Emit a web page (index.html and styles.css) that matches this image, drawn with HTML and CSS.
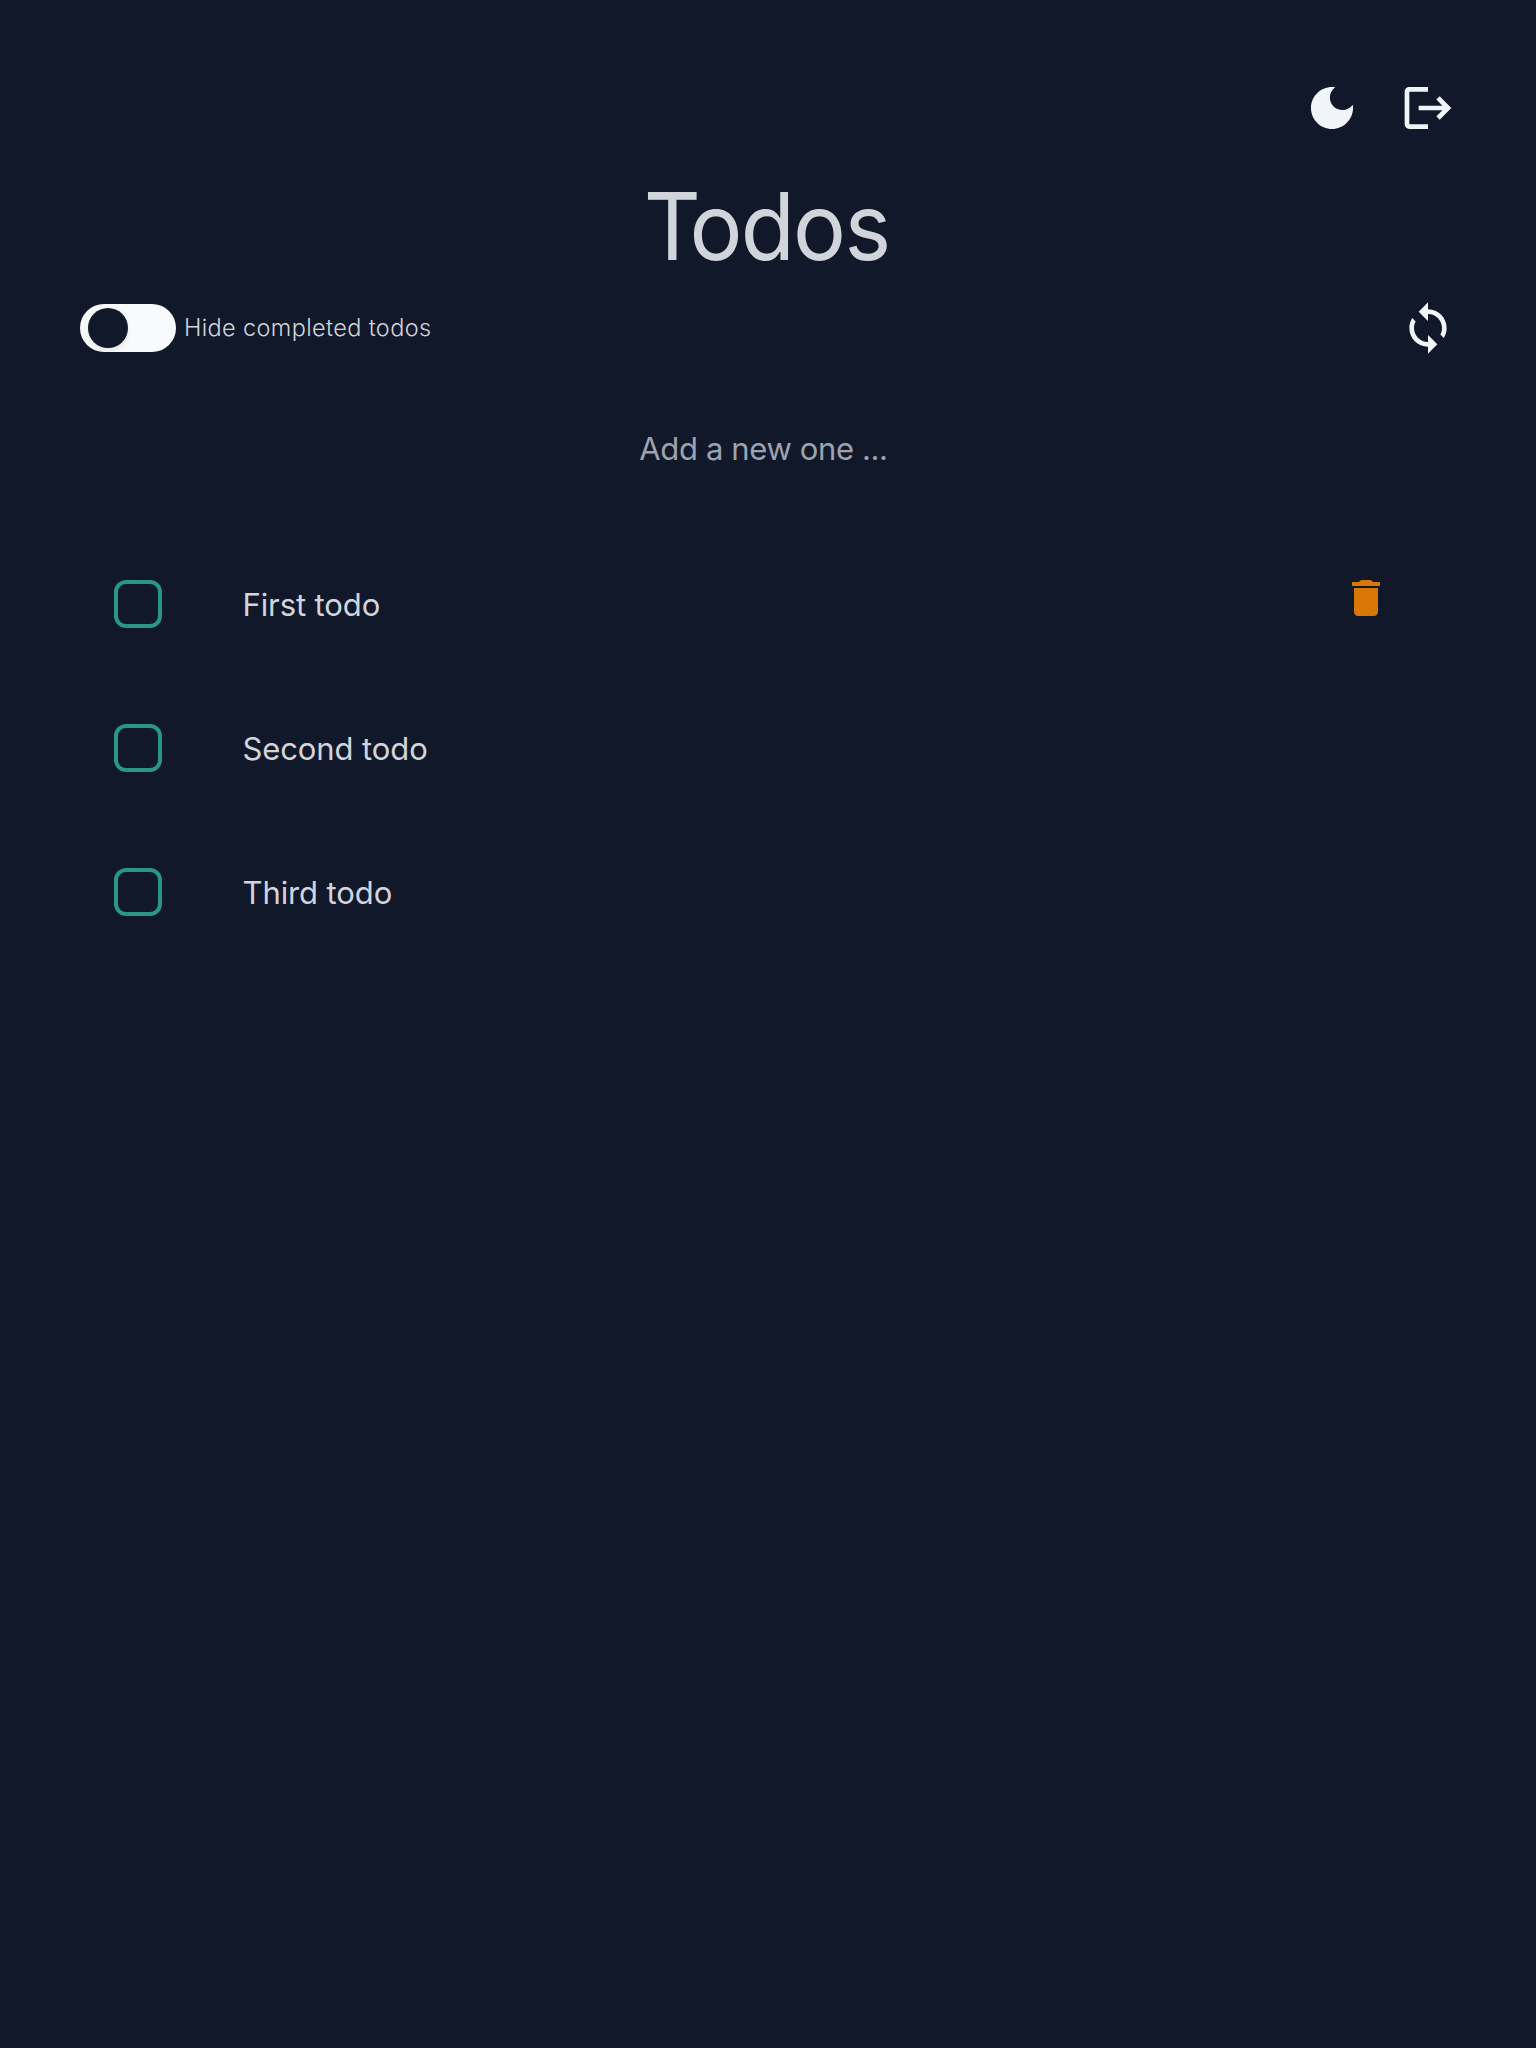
FILE: index.html
```html
<!DOCTYPE html>
<html lang="en">
<head>
<meta charset="utf-8">
<title>Todos</title>
<link rel="stylesheet" href="styles.css">
</head>
<body>
<main class="app">
  <header class="actions">
    <button class="icon-button" aria-label="Toggle theme">
      <svg viewBox="0 0 24 24"><path d="M12 3c-4.97 0-9 4.03-9 9s4.03 9 9 9 9-4.03 9-9c0-.46-.04-.92-.1-1.36-.98 1.37-2.58 2.26-4.4 2.26-2.98 0-5.4-2.42-5.4-5.4 0-1.81.89-3.42 2.26-4.4-.44-.06-.9-.1-1.36-.1z"/></svg>
    </button>
    <button class="icon-button" aria-label="Log out">
      <svg viewBox="0 0 24 24"><path d="M17 7l-1.41 1.41L18.17 11H8v2h10.17l-2.58 2.58L17 17l5-5zM4 5h8V3H4c-1.1 0-2 .9-2 2v14c0 1.1.9 2 2 2h8v-2H4V5z"/></svg>
    </button>
  </header>
  <h1 class="title">Todos</h1>
  <div class="toolbar">
    <div class="filter">
      <span class="switch" role="switch" aria-checked="false"><span class="knob"></span></span>
      <span class="filter-label">Hide completed todos</span>
    </div>
    <button class="icon-button" aria-label="Sync">
      <svg viewBox="0 0 24 24"><path d="M12 4V1L8 5l4 4V6c3.31 0 6 2.69 6 6 0 1.01-.25 1.97-.7 2.8l1.46 1.46C19.54 15.03 20 13.57 20 12c0-4.42-3.58-8-8-8zm0 14c-3.31 0-6-2.69-6-6 0-1.01.25-1.97.7-2.8L5.24 7.74C4.46 8.97 4 10.43 4 12c0 4.42 3.58 8 8 8v3l4-4-4-4v3z"/></svg>
    </button>
  </div>
  <div class="new-todo"><span class="placeholder">Add a new one ...</span></div>
  <ul class="todos">
    <li class="todo">
      <span class="checkbox"></span>
      <span class="todo-text">First todo</span>
      <button class="delete" aria-label="Delete">
        <svg viewBox="0 0 24 24"><path d="M6 19c0 1.1.9 2 2 2h8c1.1 0 2-.9 2-2V7H6v12zM19 4h-3.5l-1-1h-5l-1 1H5v2h14V4z"/></svg>
      </button>
    </li>
    <li class="todo">
      <span class="checkbox"></span>
      <span class="todo-text">Second todo</span>
    </li>
    <li class="todo">
      <span class="checkbox"></span>
      <span class="todo-text">Third todo</span>
    </li>
  </ul>
</main>
</body>
</html>
```
FILE: styles.css
```css
* { box-sizing: border-box; }
body {
  margin: 0;
  min-height: 100vh;
  background: #111829;
  color: #d1d5db;
  font-family: Inter, "Liberation Sans", sans-serif;
}
button { padding: 0; border: 0; background: none; }
svg { display: block; width: 100%; height: 100%; fill: currentColor; }
.app { padding: 80px; }
.actions { display: flex; justify-content: flex-end; gap: 40px; }
.icon-button { width: 56px; height: 56px; color: #f1f5f9; }
.title {
  margin: 42px 0 26px;
  padding-right: 3px;
  font-size: 93px;
  line-height: 96px;
  font-weight: 400;
  text-align: center;
  letter-spacing: -1.8px;
  transform: scaleX(.95);
}
.title::first-letter { letter-spacing: -12px; }
.toolbar { display: flex; justify-content: space-between; align-items: center; height: 56px; }
.filter { display: flex; align-items: center; gap: 8px; }
.switch { width: 96px; height: 48px; padding: 4px 8px; border-radius: 24px; background: #f9fafb; }
.knob {
  display: block;
  width: 40px;
  height: 40px;
  border-radius: 50%;
  background: #111829;
  box-shadow: 0 4px 6px rgba(0, 0, 0, .07);
}
.filter-label { font-size: 23.5px; font-weight: 300; line-height: 32px; letter-spacing: .36px; }
.new-todo {
  display: flex;
  justify-content: center;
  margin-top: 69px;
  padding-right: 9px;
  font-size: 31px;
  line-height: 48px;
  letter-spacing: -.37px;
  color: #9ca3af;
}
.todos { margin: 59px 0 0; padding: 0; list-style: none; }
.todo { display: flex; align-items: center; height: 144px; padding: 0 34px; }
.checkbox { width: 48px; height: 48px; border: 4px solid #2a9687; border-radius: 12px; }
.todo-text { margin-left: 80.5px; padding-top: 2px; font-size: 31px; line-height: 48px; letter-spacing: -.1px; }
.delete { width: 48px; height: 48px; margin: -12px 32px 0 auto; color: #d97706; }
```
